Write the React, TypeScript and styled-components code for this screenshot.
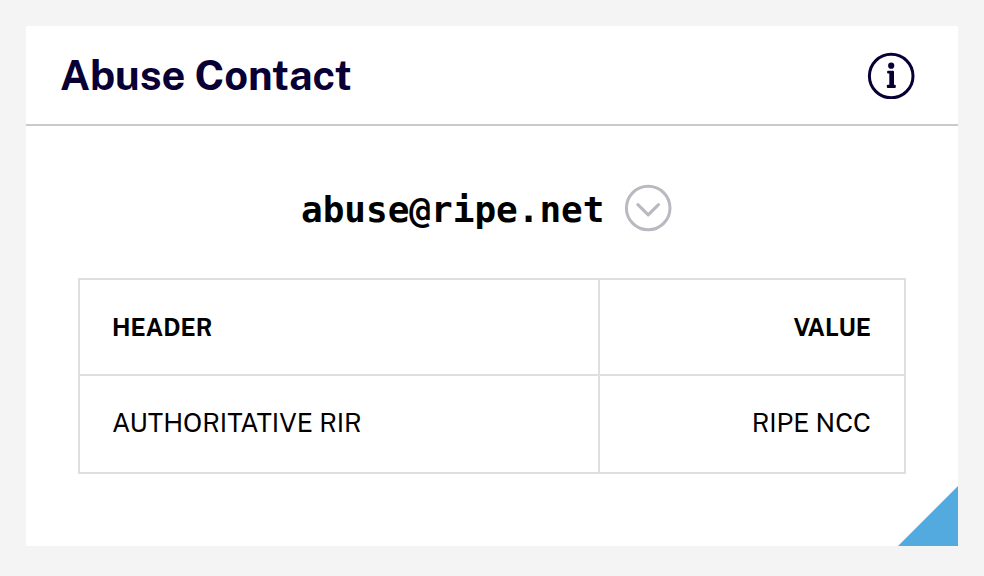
import React from 'react';
import styled, { createGlobalStyle } from 'styled-components';

const GlobalStyle = createGlobalStyle`
  * { box-sizing: border-box; }
  body { margin: 0; background: #f4f4f4; font-family: "Public Sans", Inter, sans-serif; }
`;

const Page = styled.main`
  width: 984px;
  height: 576px;
  padding: 26px 26px 30px;
  background: #f4f4f4;
`;

const Card = styled.section`
  position: relative;
  display: flex;
  flex-direction: column;
  height: 520px;
  background: #fff;
  border-radius: 1px;
`;

const CardHeader = styled.header`
  display: flex;
  align-items: center;
  justify-content: space-between;
  height: 100px;
  padding: 0 43px 0 34px;
  border-bottom: 2px solid #cacaca;
`;

const Title = styled.h1`
  margin: 0;
  font-size: 41.5px;
  line-height: 48px;
  font-weight: 700;
  letter-spacing: -0.08px;
  color: #080035;
  white-space: nowrap;
`;

const IconButton = styled.button`
  display: block;
  width: 48px;
  height: 48px;
  padding: 0;
  border: 0;
  background: none;
`;

const Contact = styled.div`
  display: flex;
  align-items: center;
  height: 60px;
  margin-top: 52px;
  padding-left: 275px;
  gap: 20px;
`;

const Email = styled.span`
  width: 303px;
  padding-top: 4px;
  font: 700 36px/48px "DejaVu Sans Mono", monospace;
  color: #000;
  white-space: nowrap;
`;

const Grid = styled.div`
  display: grid;
  grid-template-columns: 518px 304px;
  grid-template-rows: 94px 96px;
  gap: 2px;
  width: 828px;
  margin: 40px 0 0 52px;
  padding: 2px;
  background: #dfdfdf;
`;

const Cell = styled.div<{ $bold?: boolean; $end?: boolean }>`
  display: flex;
  align-items: center;
  justify-content: ${(p) => (p.$end ? 'flex-end' : 'flex-start')};
  padding: ${(p) => (p.$bold ? '0 33px 1px 32px' : '0 33px 4px 32px')};
  background: #fff;
  color: #000;
  font-size: ${(p) => (p.$bold ? '24px' : '26px')};
  font-weight: ${(p) => (p.$bold ? 700 : 400)};
  white-space: nowrap;
`;

const Corner = styled.div`
  position: absolute;
  right: 0;
  bottom: 0;
  width: 60px;
  height: 60px;
  background: #52aadf;
  clip-path: polygon(100% 0, 100% 100%, 0 100%);
`;

export default function App() {
  return (
    <Page>
      <GlobalStyle />
      <Card>
        <CardHeader>
          <Title>Abuse Contact</Title>
          <IconButton aria-label="Information">
            <svg width="48" height="48" viewBox="0 0 48 48" fill="none">
              <circle cx="24.2" cy="25" r="21.8" stroke="#080035" strokeWidth="3" />
              <circle cx="24.2" cy="14.7" r="3.1" fill="#080035" />
              <path d="M21.1 19.8h4.9a1 1 0 0 1 1 1v13h.8a1 1 0 0 1 1 1v1.2a1 1 0 0 1-1 1h-7a1 1 0 0 1-1-1v-1.2a1 1 0 0 1 1-1h1.5V22.6h-1.2a1 1 0 0 1-1-1v-.8a1 1 0 0 1 1-1z" fill="#080035" />
            </svg>
          </IconButton>
        </CardHeader>
        <Contact>
          <Email>abuse@ripe.net</Email>
          <IconButton aria-label="Show details">
            <svg width="48" height="48" viewBox="0 0 48 48" fill="none">
              <circle cx="24.2" cy="24" r="21.8" stroke="#b9b9c0" strokeWidth="3" />
              <path d="M13.9 20.6l10.3 10.2 10.3-10.2" stroke="#b9b9c0" strokeWidth="3.1" strokeLinecap="round" strokeLinejoin="round" />
            </svg>
          </IconButton>
        </Contact>
        <Grid>
          <Cell $bold>HEADER</Cell>
          <Cell $bold $end>VALUE</Cell>
          <Cell>AUTHORITATIVE RIR</Cell>
          <Cell $end>RIPE NCC</Cell>
        </Grid>
        <Corner />
      </Card>
    </Page>
  );
}
